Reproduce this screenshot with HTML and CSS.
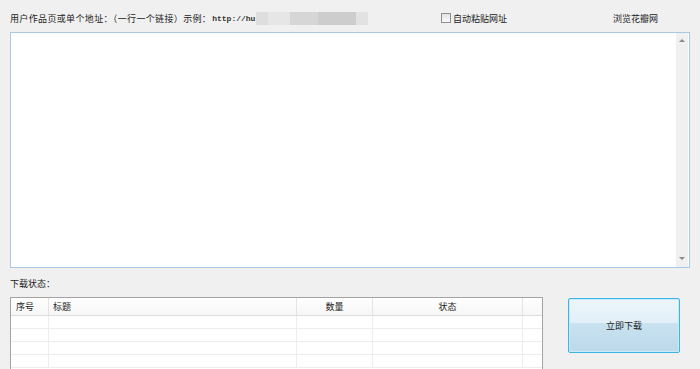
FILE: index.html
```html
<!DOCTYPE html>
<html>
<head>
  <meta charset="UTF-8" />
  <title>花瓣下载</title>
  <link rel="stylesheet" href="styles.css">
</head>
<body>
  <div class="topbar">
    <div class="addr-label"><span class="addr-text">用户作品页或单个地址：（一行一个链接）示例：</span><span class="url">http://hu</span><span class="blur"><i class="b1"></i><i class="b2"></i><i class="b3"></i><i class="b4"></i><i class="b5"></i></span></div>
    <label class="auto-paste"><span class="check"></span>自动粘贴网址</label>
    <a class="browse">浏览花瓣网</a>
  </div>

  <div class="url-box">
    <div class="url-area"></div>
    <div class="scrollbar">
      <span class="arrow up"></span>
      <span class="arrow down"></span>
    </div>
  </div>

  <div class="status-label">下载状态：</div>

  <div class="bottom">
    <div class="table">
      <div class="row head">
        <div class="c-no">序号</div>
        <div class="c-title">标题</div>
        <div class="c-num">数量</div>
        <div class="c-state">状态</div>
        <div class="c-rest"></div>
      </div>
      <div class="row"><div></div><div></div><div></div><div></div><div></div></div>
      <div class="row"><div></div><div></div><div></div><div></div><div></div></div>
      <div class="row"><div></div><div></div><div></div><div></div><div></div></div>
      <div class="row"><div></div><div></div><div></div><div></div><div></div></div>
    </div>
    <button class="go">立即下载</button>
  </div>
</body>
</html>
```

FILE: styles.css
```css
body {
  margin: 0;
  background: #f0f0f0;
  font-family: 'Noto Sans CJK SC', sans-serif;
  font-size: 9px;
  color: #222;
  height: 369px;
  overflow: hidden;
}

.topbar {
  height: 32px;
  display: flex;
  align-items: center;
  padding-left: 10px;
  padding-top: 4px;
  box-sizing: border-box;
}

.addr-label {
  width: 431px;
  display: flex;
  align-items: center;
  white-space: nowrap;
}

.addr-text {
  letter-spacing: 0.35px;
}

.url {
  font-family: 'Liberation Mono', monospace;
  font-size: 8px;
  font-weight: bold;
  color: #333;
  margin-left: 1px;
}

.blur {
  display: flex;
  height: 13px;
  margin-left: 1px;
}

.blur i {
  display: block;
  height: 13px;
}

.b1 { width: 12px; background: #dedede; }
.b2 { width: 22px; background: #e6e6e6; }
.b3 { width: 28px; background: #d6d6d6; }
.b4 { width: 38px; background: #cdcdcd; }
.b5 { width: 12px; background: #e2e2e2; }

.auto-paste {
  display: flex;
  align-items: center;
  width: 172px;
}

.check {
  width: 8px;
  height: 8px;
  border: 1px solid #8f8f8f;
  background: linear-gradient(#e4e4e4, #f8f8f8);
  margin-right: 2px;
}

.browse {
  color: #222;
}

.url-box {
  margin: 0 10px 0 10px;
  width: 680px;
  height: 236px;
  box-sizing: border-box;
  border: 1px solid #a8c8e4;
  background: #fff;
  display: flex;
}

.url-area {
  flex: 1;
}

.scrollbar {
  width: 12px;
  background: #f0f0f0;
  margin-right: 1px;
  display: flex;
  flex-direction: column;
  justify-content: space-between;
  align-items: center;
  padding: 6px 0 7px;
}

.arrow {
  width: 0;
  height: 0;
  border-left: 3px solid transparent;
  border-right: 3px solid transparent;
}

.arrow.up {
  border-bottom: 3px solid #8a8a8a;
}

.arrow.down {
  border-top: 3px solid #8a8a8a;
}

.status-label {
  height: 29px;
  padding-left: 10px;
  display: flex;
  align-items: center;
  padding-top: 2px;
  box-sizing: border-box;
}

.bottom {
  display: flex;
  align-items: flex-start;
  padding-left: 10px;
}

.table {
  width: 533px;
  height: 80px;
  box-sizing: border-box;
  border: 1px solid #a3a3a3;
  border-bottom: none;
  background: #fff;
}

.row {
  display: grid;
  grid-template-columns: 38px 248px 76px 150px 1fr;
  height: 12px;
  border-bottom: 1px solid #ededed;
}

.row > div {
  border-right: 1px solid #ededed;
}

.row > div:last-child {
  border-right: none;
}

.row.head {
  height: 17px;
  background: linear-gradient(#ffffff, #f6f6f6);
  border-bottom: 1px solid #dcdcdc;
  line-height: 17px;
}

.row.head > div {
  border-right-color: #e3e3e3;
}

.c-no {
  padding-left: 5px;
}

.c-title {
  padding-left: 4px;
}

.c-num,
.c-state {
  text-align: center;
}

.go {
  margin-left: 25px;
  margin-top: 1px;
  width: 112px;
  height: 55px;
  border: 1px solid #3db4e6;
  border-radius: 2px;
  background: linear-gradient(#ecf5fb 0%, #e2eff8 45%, #c9e2f0 46%, #bcd9ea 100%);
  font-family: 'Noto Sans CJK SC', sans-serif;
  font-size: 9px;
  color: #222;
  padding: 0;
  box-shadow: inset 0 0 0 1px #c8ecfa;
}
```
